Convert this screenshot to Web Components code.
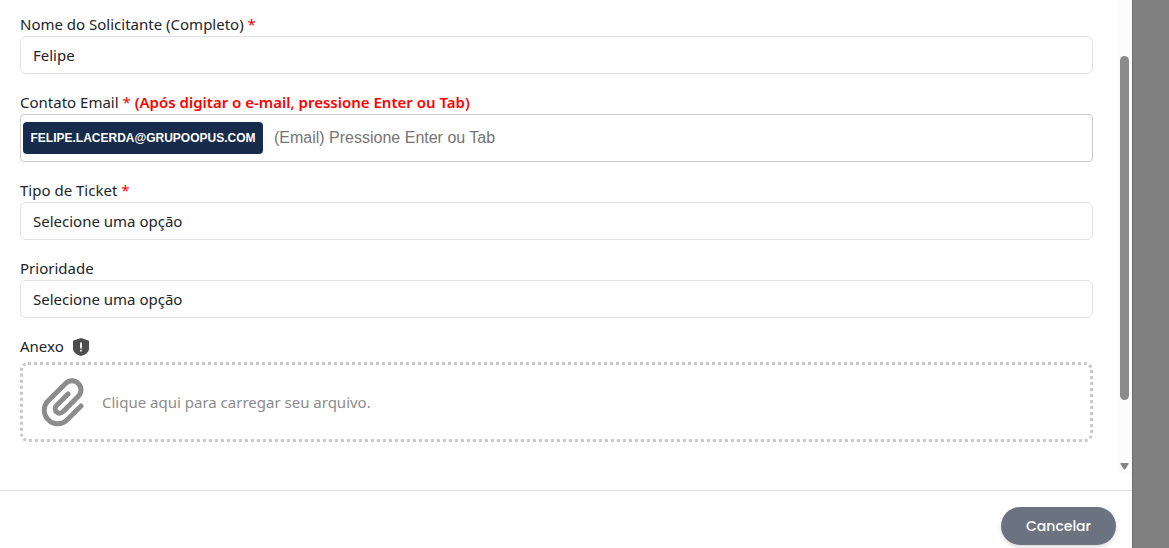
<!DOCTYPE html>
<html lang="pt-BR">
<head>
<meta charset="utf-8">
<meta name="viewport" content="width=device-width, initial-scale=1">
<title>Novo ticket</title>
<style>
  body { margin: 0; background: #808080; color: #212529; font: 16px/24px "Segoe UI", "Noto Sans", sans-serif; }
</style>
</head>
<body>
<ticket-modal>
  <text-field label="Nome do Solicitante (Completo)" value="Felipe" required></text-field>
  <email-field label="Contato Email" hint="(Após digitar o e-mail, pressione Enter ou Tab)" placeholder="(Email) Pressione Enter ou Tab" required>
    <email-chip>FELIPE.LACERDA@GRUPOOPUS.COM</email-chip>
  </email-field>
  <select-field label="Tipo de Ticket" required></select-field>
  <select-field label="Prioridade"></select-field>
  <file-field label="Anexo">Clique aqui para carregar seu arquivo.</file-field>
  <pill-button slot="footer">Cancelar</pill-button>
</ticket-modal>
<script>
const fieldStyles = `
  :host { display: block; }
  * { box-sizing: border-box; }
  .label { display: block; font-size: 15px; line-height: 24px; }
  .star { color: #f00; }
  .control { display: block; width: 100%; height: 38px; margin: 0; padding: 0 12px; border: 1px solid #dee2e6;
    border-radius: 6px; background: #fff; color: inherit; font-family: inherit; font-size: 15px; line-height: 24px;
    appearance: none; outline: none; }
`;
const star = el => el.hasAttribute('required') ? ' <span class="star">*</span>' : '';

class TicketModal extends HTMLElement {
  constructor() {
    super();
    this.attachShadow({ mode: 'open' }).innerHTML = `
      <style>
        :host { display: flex; flex-direction: column; height: 100vh; margin-right: 36px; box-sizing: border-box;
          background: #fff; border-right: 1px solid #6c6c6c; overflow: hidden; }
        .body { display: flex; flex: 1; min-height: 0; margin-bottom: 16px; }
        form { display: flex; flex-direction: column; gap: 16px; flex: 1; min-width: 0; padding: 12px 24px 0 20px; }
        footer { display: flex; justify-content: flex-end; padding: 16px 16px 3px; border-top: 1px solid #dee2e6; }
      </style>
      <div class="body"><form><slot></slot></form><scroll-track aria-hidden="true"></scroll-track></div>
      <footer><slot name="footer"></slot></footer>`;
  }
}

class ScrollTrack extends HTMLElement {
  constructor() {
    super();
    this.attachShadow({ mode: 'open' }).innerHTML = `
      <style>
        :host { display: flex; flex-direction: column; align-items: center; width: 15px; padding: 56px 0 4px; box-sizing: border-box; background: #fcfcfc; }
        .thumb { flex: 1; width: 9px; margin-bottom: 62px; border-radius: 5px; background: #8b8b8b; }
        svg { display: block; }
      </style>
      <div class="thumb"></div>
      <svg width="9" height="8" viewBox="0 0 9 8"><path d="M1 1h7q1 0 .6 1L5.4 7q-.9 1-1.8 0L.4 2Q0 1 1 1z" fill="#858585"/></svg>`;
  }
}

class TextField extends HTMLElement {
  connectedCallback() {
    this.attachShadow({ mode: 'open' }).innerHTML = `
      <style>${fieldStyles}</style>
      <label class="label" for="f">${this.getAttribute('label')}${star(this)}</label>
      <input class="control" id="f" type="text" value="${this.getAttribute('value') || ''}">`;
  }
}

class SelectField extends HTMLElement {
  connectedCallback() {
    this.attachShadow({ mode: 'open' }).innerHTML = `
      <style>${fieldStyles}</style>
      <label class="label" for="f">${this.getAttribute('label')}${star(this)}</label>
      <select class="control" id="f"><option>Selecione uma opção</option></select>`;
  }
}

class EmailField extends HTMLElement {
  connectedCallback() {
    this.attachShadow({ mode: 'open' }).innerHTML = `
      <style>${fieldStyles}
        .hint { color: #f00; font-weight: 600; }
        .box { display: flex; align-items: center; gap: 11px; height: 48px; padding: 0 2px; border: 1px solid #ccc; border-radius: 4px; }
        input { flex: 1; min-width: 0; height: 32px; padding: 0; border: 0; outline: 0; background: none; color: inherit;
          font: 16px/24px "Liberation Sans", Arial, sans-serif; }
        input::placeholder { color: #757575; }
      </style>
      <label class="label" for="f">${this.getAttribute('label')}${star(this)} <span class="hint">${this.getAttribute('hint')}</span></label>
      <div class="box"><slot></slot><input id="f" type="email" placeholder="${this.getAttribute('placeholder')}"></div>`;
  }
}

class EmailChip extends HTMLElement {
  constructor() {
    super();
    this.attachShadow({ mode: 'open' }).innerHTML = `
      <style>
        :host { display: block; flex: none; width: 240px; box-sizing: border-box; border-radius: 4px; background: #172b4d; color: #fff;
          text-align: center; font: bold 12px/32px "Liberation Sans", Arial, sans-serif; }
      </style><slot></slot>`;
  }
}

class FileField extends HTMLElement {
  connectedCallback() {
    this.attachShadow({ mode: 'open' }).innerHTML = `
      <style>${fieldStyles}
        .head { display: flex; align-items: center; gap: 8px; margin-bottom: 4px; }
        .drop { display: flex; align-items: center; gap: 18px; height: 80px; padding: 0 17px; border: 3px dotted #c8c8c8;
          border-radius: 8px; color: #8c8c8c; font-size: 15px; cursor: pointer; }
        svg { display: block; flex: none; }
        input { display: none; }
      </style>
      <div class="head"><label class="label" for="f">${this.getAttribute('label')}</label>
        <svg width="18" height="20" viewBox="0 -1 18 20" aria-hidden="true">
          <path d="M9 1l7.4 2.4q.6.2.6.8V12q0 4.600-8 7Q1 16.600 1 12V4.200q0-.6.6-.8z" fill="#4d4d4d"/>
          <path d="M8.100 5.500h1.800v6H8.100zM8.100 12.800h1.800v1.700H8.100z" fill="#fff"/>
        </svg></div>
      <label class="drop" for="f">
        <svg width="44" height="50" viewBox="0 0 44 50" fill="none" stroke="#8c8c8c" stroke-width="5" stroke-linecap="round" stroke-linejoin="round" aria-hidden="true">
          <path d="M41 29L27.200 42.800A13.400 13.400 0 0 1 8.200 23.800L25.600 6.500A9 9 0 0 1 38.400 19.200L22.700 35A4.500 4.500 0 0 1 16.300 28.700L28 17"/>
        </svg>
        <span><slot></slot></span>
      </label>
      <input id="f" type="file">`;
  }
}

class PillButton extends HTMLElement {
  constructor() {
    super();
    this.attachShadow({ mode: 'open' }).innerHTML = `
      <style>
        :host { display: block; }
        button { display: block; min-width: 115px; height: 38px; margin: 0; padding: 0 24px; border: 0; border-radius: 19px; background: #6b7280;
          color: #fff; font: 500 14px/24px Poppins, Inter, sans-serif; box-shadow: 0 2px 4px rgba(0,0,0,.15); }
      </style>
      <button type="button"><slot></slot></button>`;
  }
}

customElements.define('ticket-modal', TicketModal);
customElements.define('scroll-track', ScrollTrack);
customElements.define('text-field', TextField);
customElements.define('select-field', SelectField);
customElements.define('email-field', EmailField);
customElements.define('email-chip', EmailChip);
customElements.define('file-field', FileField);
customElements.define('pill-button', PillButton);
</script>
</body>
</html>
